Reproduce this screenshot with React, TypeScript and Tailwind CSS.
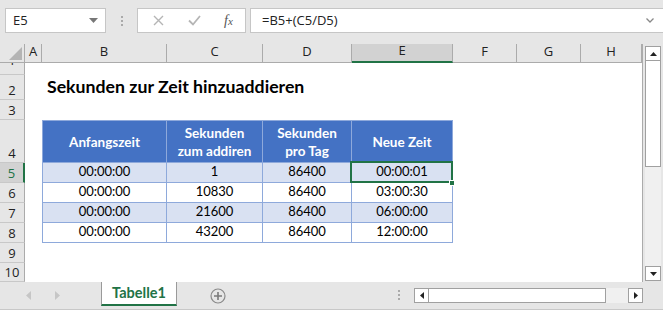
import React from 'react';

const ui = { fontFamily: '"Open Sans", "Liberation Sans", sans-serif' };
const cell = { fontFamily: 'Lato, "Liberation Sans", sans-serif' };

const cols = ['A', 'B', 'C', 'D', 'E', 'F', 'G', 'H'];
const rowNums = [1, 2, 3, 4, 5, 6, 7, 8, 9, 10];

const headers = [['Anfangszeit'], ['Sekunden', 'zum addiren'], ['Sekunden', 'pro Tag'], ['Neue Zeit']];

const data = [
  ['00:00:00', '1', '86400', '00:00:01'],
  ['00:00:00', '10830', '86400', '03:00:30'],
  ['00:00:00', '21600', '86400', '06:00:00'],
  ['00:00:00', '43200', '86400', '12:00:00'],
];

export default function App() {
  return (
    <div className="w-[663px] h-[310px] bg-[#e6e6e6] flex flex-col overflow-hidden text-[#222]">
      {/* Formula bar */}
      <div className="h-[44px] flex items-start pt-[8px] pl-[5px]" style={ui}>
        <div className="w-[101px] h-[25px] bg-white border border-[#c6c6c6] flex items-center justify-between pl-[7px] pr-[7px] text-[13px]">
          <span>E5</span>
          <svg width="9" height="5" viewBox="0 0 9 5"><path d="M0 0h9L4.5 5z" fill="#777" /></svg>
        </div>
        <div className="w-[31px] h-[25px] flex flex-col items-center justify-center gap-[2px]">
          <span className="w-[2px] h-[2px] bg-[#aaa]" />
          <span className="w-[2px] h-[2px] bg-[#aaa]" />
          <span className="w-[2px] h-[2px] bg-[#aaa]" />
        </div>
        <div className="w-[109px] h-[25px] bg-white border border-[#c6c6c6] flex items-center">
          <svg className="ml-[15px]" width="11" height="11" viewBox="0 0 11 11"><path d="M1 1l9 9M10 1l-9 9" stroke="#b5b5b5" strokeWidth="1.4" /></svg>
          <svg className="ml-[24px]" width="13" height="11" viewBox="0 0 13 11"><path d="M1 5.5l4 4L12 1" stroke="#b5b5b5" strokeWidth="1.8" fill="none" /></svg>
          <span className="ml-[23px] text-[14px] italic text-[#555]" style={{ fontFamily: '"Liberation Serif", serif' }}>f<span className="text-[11px]">x</span></span>
        </div>
        <div className="ml-[4px] flex-1 h-[25px] bg-white border border-[#c6c6c6] border-r-0 flex items-center justify-between pl-[11px] pr-[9px] text-[13px]">
          <span>=B5+(C5/D5)</span>
          <svg width="8" height="5" viewBox="0 0 8 5"><path d="M0.5 0.5l3.5 3.5 3.5-3.5" stroke="#888" strokeWidth="1.3" fill="none" /></svg>
        </div>
      </div>

      {/* Sheet */}
      <div className="h-[238px] flex">
        <div className="w-[643px] border-r border-[#ababab] bg-white grid grid-cols-[25px_17px_125px_96px_89px_101px_64px_64px_61px] grid-rows-[19px_12px_25px_20px_43px_20px_20px_20px_20px_20px_19px]">
          {/* corner */}
          <div className="col-start-1 row-start-1 bg-[#e6e6e6] border-r border-b border-[#ababab] relative">
            <svg className="absolute right-[2px] bottom-[2px]" width="13" height="13" viewBox="0 0 13 13"><path d="M13 0v13H0z" fill="#b4b4b4" /></svg>
          </div>
          {cols.map((c, i) => (
            <div
              key={c}
              className={`row-start-1 flex items-end justify-center pb-[1px] text-[13px] border-r border-[#ababab] ${
                c === 'E' ? 'bg-[#d2d2d2] border-b-2 border-b-[#217346]' : 'bg-[#e6e6e6] border-b border-b-[#ababab]'
              }`}
              style={{ ...ui, gridColumnStart: i + 2 }}
            >
              {c}
            </div>
          ))}
          {rowNums.map((r, i) => (
            <div
              key={r}
              className={`col-start-1 flex justify-center overflow-hidden text-[13px] border-b border-[#c8c8c8] ${
                r === 1 ? 'items-start' : 'items-end'
              } ${r === 5 ? 'bg-[#d2d2d2] border-r-2 border-r-[#217346] text-[#217346]' : 'bg-[#e6e6e6] border-r border-r-[#ababab]'}`}
              style={{ ...ui, gridRowStart: i + 2 }}
            >
              <span className={r === 1 ? 'leading-[18px] -mt-[12px]' : 'leading-[18px]'}>{r}</span>
            </div>
          ))}

          {/* Title */}
          <div className="col-start-3 col-span-4 row-start-3 flex items-center pl-[5px] whitespace-nowrap font-bold text-[17.7px] text-black" style={cell}>
            Sekunden zur Zeit hinzuaddieren
          </div>

          {/* Table */}
          <div className="col-start-3 col-span-4 row-start-5 row-span-5 grid grid-cols-[125px_96px_89px_101px] grid-rows-[43px_20px_20px_20px_20px] text-[13px] text-black" style={cell}>
            {headers.map((lines, i) => (
              <div
                key={i}
                className={`bg-[#4472c4] text-white font-bold text-[13.5px] flex flex-col items-center justify-center text-center leading-[18px] whitespace-nowrap border-t border-r border-b border-[#8ea9db] ${i === 0 ? 'border-l' : ''}`}
              >
                {lines.map((l) => (
                  <span key={l}>{l}</span>
                ))}
              </div>
            ))}
            {data.map((row, ri) =>
              row.map((v, ci) => (
                <div
                  key={`${ri}-${ci}`}
                  className={`flex items-end justify-center pb-[1px] border-r border-b border-[#8ea9db] ${ci === 0 ? 'border-l' : ''} ${
                    ri % 2 === 0 ? 'bg-[#d9e1f2]' : 'bg-white'
                  } ${ri === 0 && ci === 3 ? 'relative' : ''}`}
                >
                  {v}
                  {ri === 0 && ci === 3 && (
                    <>
                      <div className="absolute -left-[2px] -top-[2px] -right-[1px] -bottom-[1px] border-2 border-[#217346]" />
                      <div className="absolute -right-[3px] -bottom-[4px] w-[6px] h-[6px] bg-[#217346] border border-white" />
                    </>
                  )}
                </div>
              ))
            )}
          </div>
        </div>

        {/* Vertical scrollbar */}
        <div className="flex-1 pl-[2px] pt-[2px]">
          <div className="w-[16px] h-[235px] bg-[#f0f0f0] flex flex-col justify-between">
            <div>
              <div className="h-[15px] bg-white border border-[#a0a0a0] flex items-center justify-center">
                <svg width="7" height="4" viewBox="0 0 7 4"><path d="M0 4h7L3.5 0z" fill="#222" /></svg>
              </div>
              <div className="h-[106px] bg-white border border-t-0 border-[#a0a0a0]" />
            </div>
            <div className="h-[15px] bg-white border border-[#a0a0a0] flex items-center justify-center">
              <svg width="7" height="4" viewBox="0 0 7 4"><path d="M0 0h7L3.5 4z" fill="#222" /></svg>
            </div>
          </div>
        </div>
      </div>

      {/* Bottom tab bar */}
      <div className="h-[28px] flex items-start border-b border-[#c8c8c8]">
        <svg className="ml-[26px] mt-[9px]" width="5" height="9" viewBox="0 0 5 9"><path d="M5 0v9L0 4.5z" fill="#c6c6c6" /></svg>
        <svg className="ml-[24px] mt-[9px]" width="5" height="9" viewBox="0 0 5 9"><path d="M0 0v9L5 4.5z" fill="#c6c6c6" /></svg>
        <div
          className="ml-[41px] w-[76px] h-[24px] bg-white border-l border-r border-[#9a9a9a] border-b-2 border-b-[#217346] flex items-center justify-center font-bold text-[#217346] text-[14.5px]"
          style={cell}
        >
          Tabelle1
        </div>
        <svg className="ml-[33px] mt-[6px]" width="16" height="16" viewBox="0 0 16 16">
          <circle cx="8" cy="8" r="7" fill="none" stroke="#8a8a8a" strokeWidth="1.2" />
          <path d="M8 4v8M4 8h8" stroke="#7a7a7a" strokeWidth="1.6" />
        </svg>
        <div className="ml-[172px] mt-[8px] flex flex-col gap-[2px]">
          <span className="w-[2px] h-[2px] bg-[#aaa]" />
          <span className="w-[2px] h-[2px] bg-[#aaa]" />
          <span className="w-[2px] h-[2px] bg-[#aaa]" />
        </div>
        <div className="ml-[14px] mt-[6px] w-[229px] h-[15px] flex bg-[#f0f0f0]">
          <div className="w-[15px] h-[15px] bg-white border border-[#a0a0a0] flex items-center justify-center">
            <svg width="4" height="7" viewBox="0 0 4 7"><path d="M4 0v7L0 3.5z" fill="#222" /></svg>
          </div>
          <div className="w-[177px] h-[15px] bg-white border border-l-0 border-[#a0a0a0]" />
          <div className="flex-1" />
          <div className="w-[15px] h-[15px] bg-white border border-[#a0a0a0] flex items-center justify-center">
            <svg width="4" height="7" viewBox="0 0 4 7"><path d="M0 0v7L4 3.5z" fill="#222" /></svg>
          </div>
        </div>
      </div>
    </div>
  );
}
